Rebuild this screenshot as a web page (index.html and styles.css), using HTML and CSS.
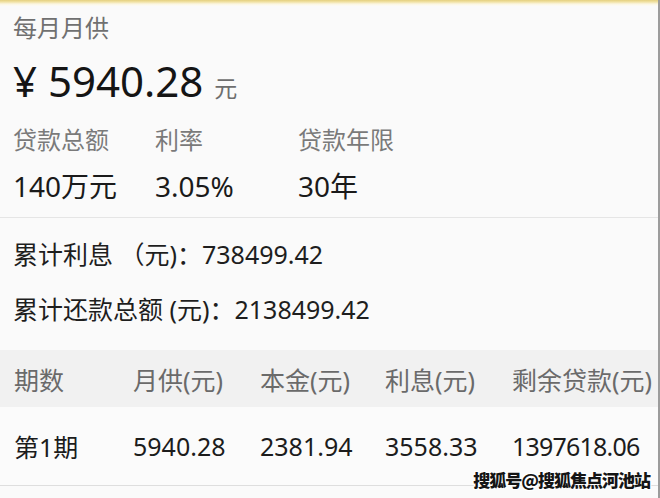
FILE: index.html
```html
<!DOCTYPE html>
<html lang="zh-CN">
<head>
<meta charset="utf-8">
<link rel="stylesheet" href="styles.css">
</head>
<body>
<div class="page">
  <div class="strip"></div>
  <div class="summary">
    <div class="label-top">每月月供</div>
    <div class="amount"><span class="yen">¥</span> 5940.28 <span class="unit">元</span></div>
    <div class="info labels">
      <span>贷款总额</span><span>利率</span><span>贷款年限</span>
    </div>
    <div class="info values">
      <span>140万元</span><span>3.05%</span><span>30年</span>
    </div>
  </div>
  <div class="divider"></div>
  <div class="totals">
    <div class="total-line">累计利息 （元)：738499.42</div>
    <div class="total-line">累计还款总额 (元)：2138499.42</div>
  </div>
  <div class="table">
    <div class="trow head">
      <span>期数</span><span>月供(元)</span><span>本金(元)</span><span>利息(元)</span><span>剩余贷款(元)</span>
    </div>
    <div class="trow data">
      <span>第1期</span><span>5940.28</span><span>2381.94</span><span>3558.33</span><span class="tight">1397618.06</span>
    </div>
  </div>
  <div class="divider bottom"></div>
  <div class="watermark">搜狐号@搜狐焦点河池站</div>
</div>
</body>
</html>
```
FILE: styles.css
```css
html, body {
  margin: 0;
  padding: 0;
  background: #fafafa;
}
body {
  font-family: "Noto Sans", "Noto Sans CJK SC", sans-serif;
  color: #1e1e1e;
}
.page {
  position: relative;
  width: 658px;
  height: 498px;
  border-right: 2px solid #9c9c9c;
  background: #fafafa;
  overflow: hidden;
}
.strip {
  height: 6px;
  background: linear-gradient(#e4d07e 0, #f1e3a6 2px, #fbf6e2 4px, #fcfbf6 6px);
}
.summary {
  padding: 0 13px;
}
.label-top {
  margin-top: 10px;
  font-size: 24px;
  line-height: 24px;
  color: #707070;
}
.amount {
  margin-top: 17px;
  font-size: 42px;
  line-height: 48px;
  color: #151515;
}
.amount .unit {
  font-size: 23px;
  color: #6e6e6e;
}
.info {
  display: grid;
  grid-template-columns: 142px 143px 1fr;
}
.labels {
  margin-top: 16px;
  font-size: 24px;
  line-height: 24px;
  color: #7a7a7a;
}
.values {
  margin-top: 18px;
  font-size: 28px;
  line-height: 32px;
  color: #1a1a1a;
}
.divider {
  margin-top: 15px;
  height: 1px;
  background: #e5e5e5;
}
.totals {
  padding: 0 13px;
}
.total-line {
  margin-top: 21px;
  font-size: 25px;
  line-height: 30px;
  color: #1e1e1e;
}
.total-line + .total-line {
  margin-top: 25px;
}
.table {
  margin-top: 26px;
}
.trow {
  display: grid;
  grid-template-columns: 119px 127px 125px 127px 1fr;
  padding-left: 14px;
  align-items: center;
}
.head {
  height: 57px;
  background: #f1f1f1;
  font-size: 25px;
  color: #6a6a6a;
}
.data {
  height: 78px;
  background: #fbfbfb;
  font-size: 25px;
  color: #1c1c1c;
}
.tight {
  letter-spacing: -0.8px;
}
.divider.bottom {
  margin-top: 0;
  background: #dedede;
}
.watermark {
  position: absolute;
  right: 8px;
  top: 470px;
  font-family: "Noto Sans CJK SC", sans-serif;
  font-size: 17px;
  line-height: 20px;
  font-weight: 900;
  letter-spacing: -1px;
  color: #151515;
  text-shadow: 1px 1px 0 #fff, -1px -1px 0 #fff, 1px -1px 0 #fff, -1px 1px 0 #fff;
}
```
